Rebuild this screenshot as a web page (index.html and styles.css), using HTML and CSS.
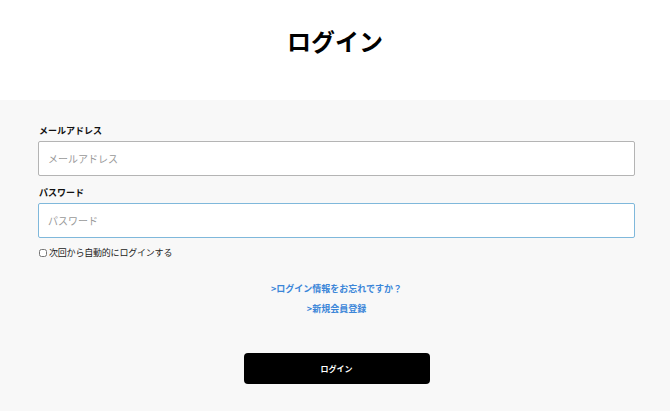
FILE: index.html
```html
<!DOCTYPE html>
<html lang="ja">
<head>
<meta charset="utf-8">
<title>ログイン</title>
<link rel="stylesheet" href="styles.css">
</head>
<body>
<header class="page-header">
  <h1 class="page-title">ログイン</h1>
</header>
<main class="login-area">
  <form class="login-form">
    <div class="field">
      <label class="field-label" for="email">メールアドレス</label>
      <input class="field-input" id="email" type="email" placeholder="メールアドレス">
    </div>
    <div class="field">
      <label class="field-label" for="password">パスワード</label>
      <input class="field-input field-input--focus" id="password" type="password" placeholder="パスワード">
    </div>
    <label class="remember"><input class="remember-box" type="checkbox">次回から自動的にログインする</label>
    <div class="links">
      <a class="link" href="#">&gt;ログイン情報をお忘れですか？</a>
      <a class="link" href="#">&gt;新規会員登録</a>
    </div>
    <div class="actions">
      <button class="submit" type="button">ログイン</button>
    </div>
  </form>
</main>
</body>
</html>
```
FILE: styles.css
```css
* { box-sizing: border-box; }
html, body { margin: 0; padding: 0; }
body {
  font-family: "Noto Sans CJK JP", "Noto Sans", sans-serif;
  color: #111;
  background: #f8f8f8;
}
.page-header {
  background: #fff;
  height: 100px;
  display: flex;
  justify-content: center;
  padding-top: 25px;
}
.page-title {
  margin: 0;
  font-size: 24px;
  line-height: 32px;
  font-weight: 700;
  color: #000;
}
.login-area {
  background: #f8f8f8;
  padding: 24px 35px 40px 38px;
}
.login-form {
  display: flex;
  flex-direction: column;
}
.field {
  display: flex;
  flex-direction: column;
  margin-bottom: 10px;
}
.field-label {
  font-size: 9px;
  line-height: 14px;
  font-weight: 700;
  margin-bottom: 3px;
  margin-left: 1px;
  color: #111;
}
.field-input {
  height: 35px;
  border: 1px solid #b4b4b4;
  border-radius: 2px;
  background: #fff;
  padding: 0 9px;
  font-family: inherit;
  font-size: 10px;
  outline: none;
}
.field-input::placeholder { color: #999; }
.field-input--focus { border-color: #7fb8db; }
.remember {
  display: flex;
  align-items: center;
  font-size: 9px;
  line-height: 14px;
  color: #222;
  margin-top: -2px;
  margin-left: 1px;
  letter-spacing: -0.2px;
}
.remember-box {
  width: 8px;
  height: 8px;
  margin: 0 2px 0 0;
}
.links {
  display: flex;
  flex-direction: column;
  align-items: center;
  gap: 6px;
  margin-top: 22px;
}
.link {
  font-size: 9px;
  line-height: 14px;
  font-weight: 700;
  color: #3b86d8;
  text-decoration: none;
}
.actions {
  display: flex;
  justify-content: center;
  margin-top: 37px;
}
.submit {
  width: 186px;
  height: 31px;
  background: #000;
  color: #fff;
  border: none;
  border-radius: 4px;
  font-family: inherit;
  font-size: 8px;
  font-weight: 700;
}
```
